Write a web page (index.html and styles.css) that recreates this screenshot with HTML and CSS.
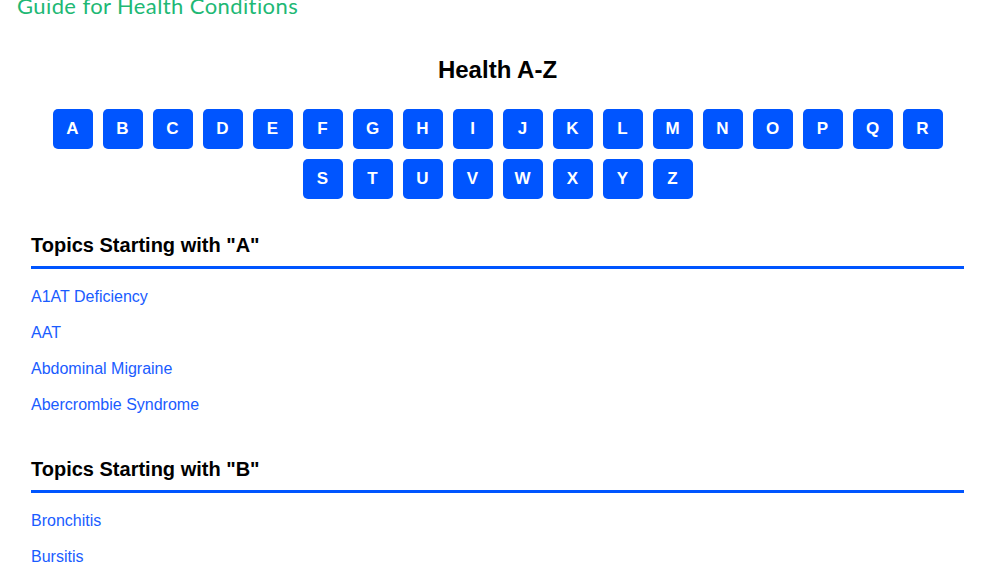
FILE: index.html
```html
<!DOCTYPE html>
<html lang="en">
<head>
<meta charset="utf-8">
<title>Health A-Z</title>
<link rel="stylesheet" href="styles.css">
</head>
<body>
<header class="site-header">
  <div class="brand">Guide for Health Conditions</div>
</header>
<main class="content">
  <h1 class="page-title">Health A-Z</h1>
  <nav class="letters">
    <a class="letter" href="#a">A</a><a class="letter" href="#b">B</a><a class="letter" href="#">C</a><a class="letter" href="#">D</a><a class="letter" href="#">E</a><a class="letter" href="#">F</a><a class="letter" href="#">G</a><a class="letter" href="#">H</a><a class="letter" href="#">I</a><a class="letter" href="#">J</a><a class="letter" href="#">K</a><a class="letter" href="#">L</a><a class="letter" href="#">M</a><a class="letter" href="#">N</a><a class="letter" href="#">O</a><a class="letter" href="#">P</a><a class="letter" href="#">Q</a><a class="letter" href="#">R</a><a class="letter" href="#">S</a><a class="letter" href="#">T</a><a class="letter" href="#">U</a><a class="letter" href="#">V</a><a class="letter" href="#">W</a><a class="letter" href="#">X</a><a class="letter" href="#">Y</a><a class="letter" href="#">Z</a>
  </nav>
  <section class="topic-group" id="a">
    <h2 class="topic-heading">Topics Starting with "A"</h2>
    <ul class="topic-list">
      <li><a href="#">A1AT Deficiency</a></li>
      <li><a href="#">AAT</a></li>
      <li><a href="#">Abdominal Migraine</a></li>
      <li><a href="#">Abercrombie Syndrome</a></li>
    </ul>
  </section>
  <section class="topic-group" id="b">
    <h2 class="topic-heading">Topics Starting with "B"</h2>
    <ul class="topic-list">
      <li><a href="#">Bronchitis</a></li>
      <li><a href="#">Bursitis</a></li>
    </ul>
  </section>
</main>
</body>
</html>
```

FILE: styles.css
```css
html, body {
  margin: 0;
  padding: 0;
  background: #ffffff;
  font-family: "Liberation Sans", Arial, sans-serif;
  overflow: hidden;
}

.site-header {
  padding: 0 17px;
  margin-top: -8px;
  height: 30px;
}

.brand {
  font-family: Lato, "Open Sans", sans-serif;
  font-size: 22px;
  line-height: 28px;
  color: #20b874;
  letter-spacing: 0.4px;
}

.content {
  padding: 0 28px 0 31px;
}

.page-title {
  margin: 34px 0 0;
  text-align: center;
  font-size: 24px;
  line-height: 28px;
  font-weight: 700;
  color: #000;
}

.letters {
  margin: 25px auto 0;
  width: 890px;
  display: flex;
  flex-wrap: wrap;
  justify-content: center;
  gap: 10px;
}

.letter {
  width: 40px;
  height: 40px;
  border-radius: 5px;
  background: #0055ff;
  color: #fff;
  font-weight: 700;
  font-size: 17px;
  display: flex;
  align-items: center;
  justify-content: center;
  text-decoration: none;
}

.topic-group {
  margin-top: 34px;
}

.topic-heading {
  margin: 0;
  font-size: 20px;
  line-height: 24px;
  font-weight: 700;
  color: #000;
  padding-bottom: 9px;
  border-bottom: 3px solid #0055ff;
}

.topic-list {
  list-style: none;
  margin: 10px 0 0;
  padding: 0;
}

.topic-list li {
  line-height: 36px;
  font-size: 16px;
}

.topic-list a {
  color: #1a5cff;
  text-decoration: none;
}
```
